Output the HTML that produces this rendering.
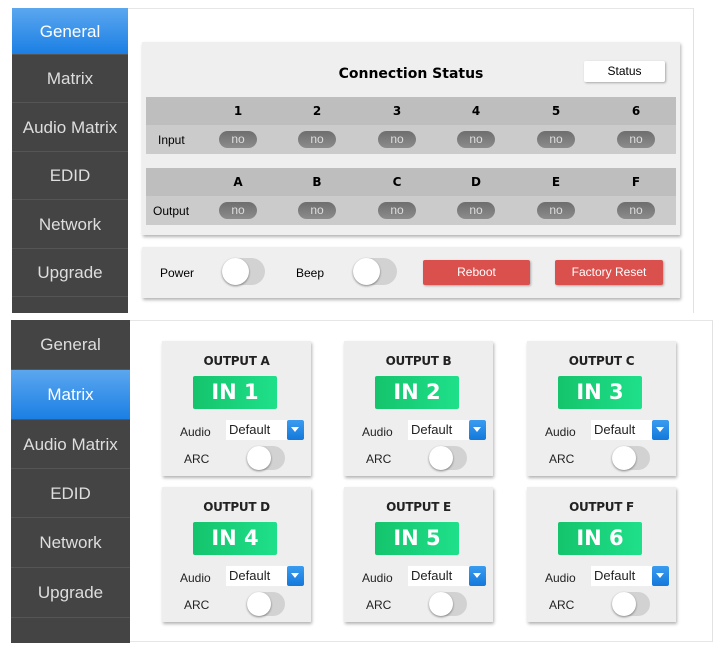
<!DOCTYPE html>
<html><head><meta charset="utf-8"><style>
*{box-sizing:border-box;margin:0;padding:0}
body{width:728px;height:649px;background:#fff;position:relative;overflow:hidden;font-family:"Liberation Sans",sans-serif}
.a{position:absolute}
.side{background:#444444}
.nav{position:absolute;left:0;width:100%;color:#dedede;text-align:center;border-bottom:1px solid #555;font-size:17px}
.sel{background:linear-gradient(#5ba7ef,#1b7fe4);color:#fff}
.pill{position:absolute;width:38px;height:17px;border-radius:9px;background:linear-gradient(#6e6e6e,#8c8c8c);color:#ddd;font-size:12px;text-align:center;line-height:17px}
.hd{position:absolute;font-weight:bold;font-size:12px;width:30px;text-align:center;font-family:"DejaVu Sans",sans-serif}
.tog{position:absolute;border-radius:14px;background:#d2d2d2}
.tog i{position:absolute;left:0;top:0;border-radius:50%;background:#fff;box-shadow:0 1px 2px rgba(0,0,0,.45)}
.card{position:absolute;width:149px;height:135px;background:#eeeeee;box-shadow:1px 2px 3px rgba(0,0,0,.3)}
.card .t{position:absolute;top:13px;width:100%;text-align:center;font-weight:bold;font-size:12px;color:#222;font-family:"DejaVu Sans",sans-serif;letter-spacing:-0.3px}
.card .in{position:absolute;left:31px;top:35px;width:84px;height:33px;background:linear-gradient(90deg,#14c46c,#1fe08a);color:#fff;font-weight:bold;font-size:21px;text-align:center;line-height:33px;border-radius:2px;font-family:"DejaVu Sans",sans-serif}
.card .al{position:absolute;left:18px;top:84px;font-size:12px;color:#222}
.card .se{position:absolute;left:64px;top:79px;width:78px;height:20px;background:#fff;font-size:13px;padding-left:3px;line-height:19px;color:#222}
.card .se b{position:absolute;right:0;top:0;width:17px;height:20px;background:linear-gradient(#3a9cf0,#1478dc);border-radius:2px}
.card .se b:after{content:"";position:absolute;left:4px;top:7px;border-left:4.5px solid transparent;border-right:4.5px solid transparent;border-top:5px solid #fff}
.card .ar{position:absolute;left:22px;top:111px;font-size:12px;color:#222}
.btn{position:absolute;background:#d9504d;color:#fff;font-size:12px;text-align:center;line-height:25px;border-radius:2px;box-shadow:1px 1px 2px rgba(0,0,0,.3)}
</style></head><body>
<div class="a" style="left:128px;top:8px;width:566px;height:305px;border-top:1px solid #e6e6e6;border-right:1px solid #e2e2e2"></div>
<div class="a side" style="left:12px;top:8px;width:116px;height:305px">
<div class="nav sel" style="top:0;height:47px;line-height:47px">General</div>
<div class="nav" style="top:47px;height:48px;line-height:48px">Matrix</div>
<div class="nav" style="top:95px;height:49px;line-height:49px">Audio Matrix</div>
<div class="nav" style="top:144px;height:48px;line-height:48px">EDID</div>
<div class="nav" style="top:192px;height:49px;line-height:49px">Network</div>
<div class="nav" style="top:241px;height:48px;line-height:48px">Upgrade</div>
</div>
<div class="a" style="left:142px;top:42px;width:538px;height:193px;background:#efefef;box-shadow:1px 2px 3px rgba(0,0,0,.3)"></div>
<div class="a" style="left:142px;top:66px;width:538px;text-align:center;font-weight:bold;font-size:14px;font-family:'DejaVu Sans',sans-serif">Connection Status</div>
<div class="a" style="left:584px;top:61px;width:81px;height:21px;background:#fff;border-radius:2px;box-shadow:1px 1px 2px rgba(0,0,0,.3);font-size:12px;text-align:center;line-height:21px">Status</div>
<div class="a" style="left:146px;top:97px;width:530px;height:28px;background:#bebebe"></div>
<div class="a" style="left:146px;top:125px;width:530px;height:29px;background:#cbcbcb"></div>
<div class="a" style="left:146px;top:168px;width:530px;height:28px;background:#bebebe"></div>
<div class="a" style="left:146px;top:196px;width:530px;height:29px;background:#cbcbcb"></div>
<div class="a" style="left:158px;top:133px;font-size:12px">Input</div>
<div class="a" style="left:153px;top:204px;font-size:12px">Output</div>
<div class="hd" style="left:223px;top:104px">1</div><div class="hd" style="left:302px;top:104px">2</div><div class="hd" style="left:382px;top:104px">3</div><div class="hd" style="left:461px;top:104px">4</div><div class="hd" style="left:541px;top:104px">5</div><div class="hd" style="left:621px;top:104px">6</div>
<div class="hd" style="left:223px;top:175px">A</div><div class="hd" style="left:302px;top:175px">B</div><div class="hd" style="left:382px;top:175px">C</div><div class="hd" style="left:461px;top:175px">D</div><div class="hd" style="left:541px;top:175px">E</div><div class="hd" style="left:621px;top:175px">F</div>
<div class="pill" style="left:219px;top:131px">no</div><div class="pill" style="left:298px;top:131px">no</div><div class="pill" style="left:378px;top:131px">no</div><div class="pill" style="left:457px;top:131px">no</div><div class="pill" style="left:537px;top:131px">no</div><div class="pill" style="left:617px;top:131px">no</div>
<div class="pill" style="left:219px;top:202px">no</div><div class="pill" style="left:298px;top:202px">no</div><div class="pill" style="left:378px;top:202px">no</div><div class="pill" style="left:457px;top:202px">no</div><div class="pill" style="left:537px;top:202px">no</div><div class="pill" style="left:617px;top:202px">no</div>
<div class="a" style="left:142px;top:247px;width:538px;height:51px;background:#efefef;box-shadow:1px 2px 3px rgba(0,0,0,.3)"></div>
<div class="a" style="left:160px;top:266px;font-size:12px">Power</div>
<div class="tog" style="left:222px;top:258px;width:43px;height:27px"><i style="width:27px;height:27px"></i></div>
<div class="a" style="left:296px;top:266px;font-size:12px">Beep</div>
<div class="tog" style="left:353px;top:258px;width:44px;height:27px"><i style="width:27px;height:27px"></i></div>
<div class="btn" style="left:423px;top:260px;width:107px">Reboot</div>
<div class="btn" style="left:555px;top:260px;width:108px">Factory Reset</div>
<div class="a" style="left:130px;top:320px;width:583px;height:322px;border-top:1px solid #e6e6e6;border-right:1px solid #e2e2e2;border-bottom:1px solid #e6e6e6"></div>
<div class="a side" style="left:11px;top:320px;width:119px;height:323px">
<div class="nav" style="top:0;height:50px;line-height:50px">General</div>
<div class="nav sel" style="top:50px;height:50px;line-height:50px">Matrix</div>
<div class="nav" style="top:100px;height:49px;line-height:49px">Audio Matrix</div>
<div class="nav" style="top:149px;height:49px;line-height:49px">EDID</div>
<div class="nav" style="top:198px;height:50px;line-height:50px">Network</div>
<div class="nav" style="top:248px;height:50px;line-height:50px">Upgrade</div>
</div>
<div class="card" style="left:162px;top:341px"><div class="t">OUTPUT A</div><div class="in">IN 1</div><div class="al">Audio</div><div class="se">Default<b></b></div><div class="ar">ARC</div><div class="tog" style="left:85px;top:105px;width:38px;height:24px"><i style="width:24px;height:24px"></i></div></div>
<div class="card" style="left:344px;top:341px"><div class="t">OUTPUT B</div><div class="in">IN 2</div><div class="al">Audio</div><div class="se">Default<b></b></div><div class="ar">ARC</div><div class="tog" style="left:85px;top:105px;width:38px;height:24px"><i style="width:24px;height:24px"></i></div></div>
<div class="card" style="left:527px;top:341px"><div class="t">OUTPUT C</div><div class="in">IN 3</div><div class="al">Audio</div><div class="se">Default<b></b></div><div class="ar">ARC</div><div class="tog" style="left:85px;top:105px;width:38px;height:24px"><i style="width:24px;height:24px"></i></div></div>
<div class="card" style="left:162px;top:487px"><div class="t">OUTPUT D</div><div class="in">IN 4</div><div class="al">Audio</div><div class="se">Default<b></b></div><div class="ar">ARC</div><div class="tog" style="left:85px;top:105px;width:38px;height:24px"><i style="width:24px;height:24px"></i></div></div>
<div class="card" style="left:344px;top:487px"><div class="t">OUTPUT E</div><div class="in">IN 5</div><div class="al">Audio</div><div class="se">Default<b></b></div><div class="ar">ARC</div><div class="tog" style="left:85px;top:105px;width:38px;height:24px"><i style="width:24px;height:24px"></i></div></div>
<div class="card" style="left:527px;top:487px"><div class="t">OUTPUT F</div><div class="in">IN 6</div><div class="al">Audio</div><div class="se">Default<b></b></div><div class="ar">ARC</div><div class="tog" style="left:85px;top:105px;width:38px;height:24px"><i style="width:24px;height:24px"></i></div></div>
</body></html>
